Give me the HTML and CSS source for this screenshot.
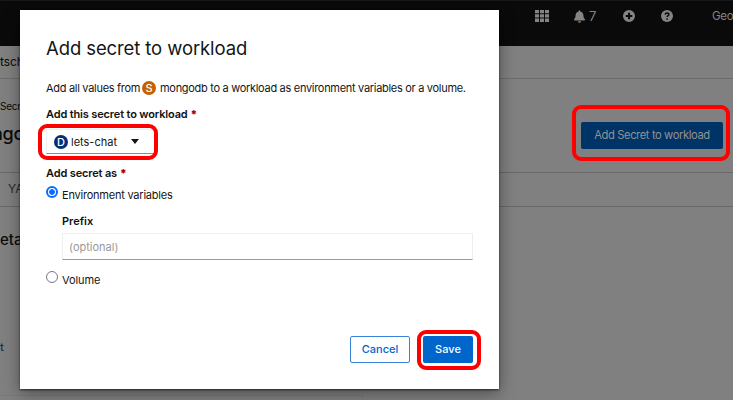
FILE: index.html
```html
<!DOCTYPE html>
<html lang="en">
<head>
<meta charset="utf-8">
<title>Add secret to workload</title>
<link rel="stylesheet" href="styles.css">
</head>
<body>
<div class="page">
  <header class="masthead">
    <svg class="icon grid" width="14" height="12" viewBox="0 0 14 12"><path d="M0 0h4v3.3H0zM5 0h4v3.3H5zM10 0h4v3.3h-4zM0 4.3h4v3.3H0zM5 4.3h4v3.3H5zM10 4.3h4v3.3h-4zM0 8.6h4V12H0zM5 8.6h4V12H5zM10 8.6h4V12h-4z"/></svg>
    <svg class="icon bell" width="11" height="13" viewBox="0 0 448 512"><path d="M224 512c35 0 64-29 64-64H160c0 35 29 64 64 64zm215-150c-19-20-55-51-55-154 0-77-54-139-128-154V32a32 32 0 0 0-64 0v22C118 69 64 131 64 208c0 103-36 134-55 154-6 6-9 14-9 22 0 16 13 32 32 32h384c19 0 32-16 32-32 0-8-3-16-9-22z"/></svg>
    <span class="count">7</span>
    <svg class="icon plus" width="12" height="12" viewBox="0 0 12 12"><path fill-rule="evenodd" d="M6 0a6 6 0 1 0 0 12A6 6 0 0 0 6 0zM5 2.7h2V5h2.3v2H7v2.3H5V7H2.7V5H5z"/></svg>
    <svg class="icon help" width="12" height="12" viewBox="0 0 12 12"><circle cx="6" cy="6" r="6"/><path class="mark" d="M4.1 4.6C4.3 3.4 5 2.9 6 2.9c1.100 0 1.900.6 1.900 1.500C7.900 5.600 6.100 5.500 6.100 7.100M6.100 8.200v1.500"/></svg>
    <span class="user">Geo</span>
  </header>
  <div class="project"><span>tsch</span></div>
  <nav class="crumbs"><span>Secrets</span></nav>
  <div class="heading">
    <h1>ngo</h1>
    <button class="btn primary dim">Add Secret to workload</button>
  </div>
  <div class="tabs"><span>YAML</span></div>
  <section class="details">
    <h2>etails</h2>
    <span class="link">t</span>
  </section>
  <div class="foot"></div>
</div>
<div class="ring ring-page"></div>

<div class="modal">
  <h3>Add secret to workload</h3>
  <p class="intro"><span class="before">Add all values from</span><span class="badge secret">S</span><span class="after">mongodb to a workload as environment variables or a volume.</span></p>
  <div class="label workload"><span>Add this secret to workload</span><b>*</b></div>
  <div class="select"><span class="badge deploy">D</span><span class="value">lets-chat</span><i class="caret"></i><div class="ring ring-select"></div></div>
  <div class="label as"><span>Add secret as</span><b>*</b></div>
  <div class="option"><i class="radio on"></i><span class="env">Environment variables</span></div>
  <div class="label prefix"><span>Prefix</span></div>
  <div class="input"><span>(optional)</span></div>
  <div class="option volume"><i class="radio"></i><span>Volume</span></div>
  <footer class="actions">
    <button class="btn secondary">Cancel</button>
    <div class="save"><button class="btn primary">Save</button><div class="ring ring-save"></div></div>
  </footer>
</div>
</body>
</html>
```

FILE: styles.css
```css
* { box-sizing: border-box; }
body {
  margin: 0;
  width: 733px;
  height: 400px;
  overflow: hidden;
  position: relative;
  background: #808080;
  color: #151515;
  font: 11px/16px Inter, "Open Sans", sans-serif;
}
h1, h2, h3, p { margin: 0; font-weight: 500; }
span { white-space: nowrap; }
.page { height: 400px; overflow: hidden; display: flex; flex-direction: column; color: #0b0b0b; }
.masthead {
  flex: none;
  height: 46px;
  padding: 8px 0 0 535px;
  display: flex;
  align-items: flex-start;
  background: #0a0a0a;
  border-top: 1px solid #171717;
  color: #848484;
}
.icon { flex: none; fill: #848484; margin-top: 1px; }
.bell { margin-left: 25px; }
.count { flex: none; width: 9px; margin-left: 4px; font-size: 13px; line-height: 15px; }
.plus { margin-left: 25px; }
.help { margin-left: 26px; }
.mark { fill: none; stroke: #0a0a0a; stroke-width: 1.500; }
.user { margin-left: 39px; font-size: 11.500px; line-height: 15px; letter-spacing: -.3px; }
.project { flex: none; height: 33px; padding: 8px 0 0; border-bottom: 1px solid #6c6c6c; font-size: 12px; letter-spacing: -.1px; }
.crumbs { flex: none; height: 40px; padding-top: 19px; font-size: 10px; letter-spacing: -.2px; }
.heading { flex: none; height: 54px; padding: 3px 10px 0 0; display: flex; justify-content: space-between; align-items: flex-start; border-bottom: 1px solid #696969; }
.heading h1 { margin-left: -8px; font-size: 18px; line-height: 24px; letter-spacing: -.3px; }
.tabs { flex: none; height: 34px; padding: 8px 0 0 8px; border-bottom: 1px solid #696969; font-size: 12px; color: #292929; }
.details { flex: none; height: 188px; display: flex; flex-direction: column; }
.details h2 { margin-top: 24px; font-size: 15px; line-height: 18px; }
.link { margin-top: 90px; color: #063467; font-weight: 500; line-height: 16px; }
.foot { width: 363px; height: 5px; border-top: 1px solid #797979; border-right: 1px solid #797979; }
.btn { height: 27px; padding: 0; border: 0; border-radius: 2px; font: 500 11px/27px Inter, "Open Sans", sans-serif; text-align: center; white-space: nowrap; }
.primary { background: #0066cc; color: #fff; }
.dim { width: 142px; background: #003366; color: #929292; font-weight: 400; font-size: 11.200px; letter-spacing: -.1px; }
.ring { position: absolute; border: 4px solid #f00; border-radius: 9px; }
.ring-page { left: 572px; top: 105px; width: 158px; height: 56px; }
.modal {
  position: absolute;
  left: 20px;
  top: 10px;
  width: 479px;
  height: 379px;
  padding: 24px 26px 0;
  display: flex;
  flex-direction: column;
  background: #fff;
  box-shadow: 0 1px 2px rgba(0,0,0,.6), 0 4px 16px rgba(0,0,0,.4);
}
.modal h3 { font-size: 18.500px; line-height: 28px; letter-spacing: -.1px; font-weight: 400; }
.intro { margin-top: 18px; height: 16px; display: flex; align-items: center; font-weight: 400; letter-spacing: -.3px; }
.before { width: 96px; }
.badge { flex: none; width: 14px; height: 14px; border-radius: 50%; text-align: center; color: #fff; font: 500 11px/14px Inter, sans-serif; letter-spacing: 0; }
.secret { background: #c46100; }
.after { margin-left: 4px; }
.label { display: flex; font-weight: 600; line-height: 16px; color: #111; letter-spacing: -.15px; }
.label b { margin-left: 3px; color: #b00000; }
.workload { margin-top: 10px; }
.select { position: relative; width: 110px; height: 25px; margin-top: 7px; padding-left: 7px; display: flex; align-items: center; border: 1px solid #eee; border-bottom: 1px solid #8a8d90; }
.deploy { background: #003078; }
.value { width: 59px; margin-left: 3px; }
.caret { border: 4px solid transparent; border-top: 5px solid #151515; border-bottom: 0; margin-left: 1px; }
.ring-select { left: -9px; top: -6px; width: 120px; height: 36px; }
.as { margin-top: 11px; }
.option { height: 16px; margin-top: 6px; display: flex; gap: 4px; letter-spacing: -.22px; }
.radio { flex: none; width: 12px; height: 12px; margin-top: -1px; border: 1.500px solid #777785; border-radius: 50%; }
.on { border: 2px solid #0b6cff; background: radial-gradient(circle, #0b6cff 0 2.500px, #fff 3.200px); }
.prefix { margin: 10px 0 0 16px; letter-spacing: 0; }
.input { height: 27px; width: 411px; margin: 4px 0 0 16px; padding: 5px 6px; border: 1px solid #eee; border-bottom: 1px solid #9b9b9b; color: #999; }
.volume { margin-top: 12px; letter-spacing: -.1px; }
.actions { display: flex; justify-content: flex-end; gap: 13px; margin-top: 48px; }
.secondary { width: 60px; background: #fff; border: 1px solid #3984d9; color: #0066cc; line-height: 25px; }
.save { position: relative; width: 50px; }
.save .btn { width: 50px; }
.ring-save { left: -6px; top: -6px; width: 64px; height: 40px; }
.dim { letter-spacing: -.4px; }
```
